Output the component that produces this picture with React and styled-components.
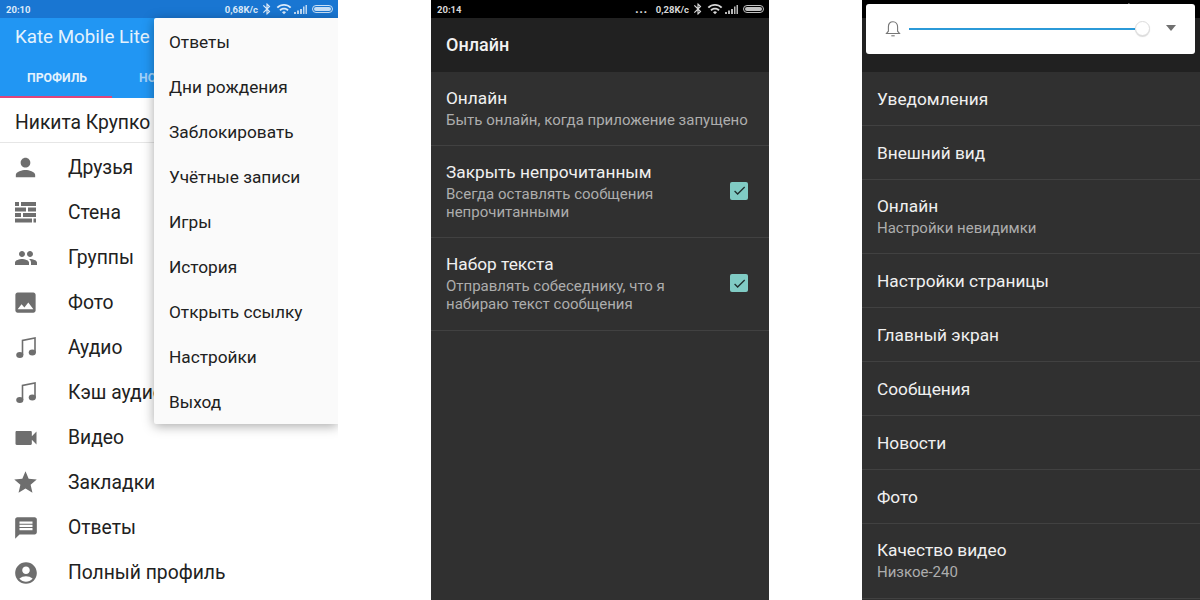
import styled, { createGlobalStyle } from "styled-components";
import {
  MdPerson,
  MdGroup,
  MdImage,
  MdVideocam,
  MdStar,
  MdMessage,
  MdAccountCircle,
  MdBluetooth,
  MdWifi,
  MdCheck,
} from "react-icons/md";

const GlobalStyle = createGlobalStyle`
  html, body {
    margin: 0;
    padding: 0;
    background: #fff;
    font-family: Roboto, "Liberation Sans", sans-serif;
  }
`;

const Page = styled.div`
  display: flex;
  justify-content: space-between;
  width: 1200px;
  height: 600px;
  overflow: hidden;
`;

const Phone = styled.div`
  position: relative;
  display: flex;
  flex-direction: column;
  width: 338px;
  height: 600px;
  overflow: hidden;
  background: ${(p) => (p.$dark ? "#303030" : "#fff")};
`;

const StatusBar = styled.div`
  display: flex;
  align-items: center;
  flex: 0 0 18px;
  padding: 0 5px 0 6px;
  background: ${(p) => (p.$dark ? "#000" : "#1976d2")};
  color: ${(p) => (p.$dark ? "#d8d8d8" : "#dcebfa")};
  font-size: 9.5px;
  font-weight: 700;
`;

const StatusRight = styled.div`
  display: flex;
  align-items: center;
  gap: 2px;
  margin-left: auto;
`;

const Dots = styled.span`
  margin-right: 6px;
  font-size: 13px;
  line-height: 12px;
  letter-spacing: 0.5px;
`;

const Battery = styled.span`
  width: 21px;
  height: 8px;
  margin-left: 3px;
  border: 1px solid currentColor;
  border-radius: 4px;
  background: currentColor;
  background-clip: content-box;
  padding: 1px;
  box-sizing: border-box;
  opacity: 0.9;
`;

const Toolbar = styled.div`
  display: flex;
  flex-direction: column;
  flex: 0 0 80px;
  box-sizing: border-box;
  background: #2196f3;
`;

const AppTitle = styled.div`
  flex: 1;
  padding: 7px 0 0 15px;
  color: #e3f2fd;
  font-size: 18.75px;
  line-height: 24px;
`;

const Tabs = styled.div`
  display: flex;
  flex: 0 0 40px;
`;

const Tab = styled.div`
  flex: 0 0 112px;
  box-sizing: border-box;
  padding: 3px 0 0 27px;
  color: ${(p) => (p.$active ? "#e3f2fd" : "rgba(255, 255, 255, 0.6)")};
  font-size: 12.25px;
  font-weight: 700;
  line-height: 36px;
  border-bottom: 2px solid ${(p) => (p.$active ? "#e0457b" : "transparent")};
`;

const NameRow = styled.div`
  flex: 0 0 45px;
  min-height: 0;
  box-sizing: border-box;
  padding-left: 15px;
  color: #212121;
  font-size: 19.3px;
  line-height: 49px;
  border-bottom: 1px solid #e6e6e6;
`;

const MenuList = styled.div`
  display: flex;
  flex-direction: column;
  padding-top: 2px;
`;

const ListRow = styled.div`
  display: flex;
  align-items: center;
  height: 45px;
  padding-left: 15px;
  color: #212121;
  font-size: 19.3px;
  white-space: nowrap;
`;

const IconSlot = styled.span`
  display: flex;
  align-items: center;
  justify-content: center;
  width: 21px;
  margin-right: 32px;
  color: #6e6e6e;

  svg {
    flex: none;
  }
`;

const Dropdown = styled.div`
  position: absolute;
  top: 18px;
  left: 154px;
  right: 0;
  padding-top: 1px;
  background: #fafafa;
  border-radius: 2px 0 0 2px;
  box-shadow: 0 2px 12px rgba(0, 0, 0, 0.35);
`;

const DropdownItem = styled.div`
  height: 45px;
  padding-left: 15px;
  color: #212121;
  font-size: 17.25px;
  line-height: 47px;
`;

const DarkHeader = styled.div`
  flex: 0 0 54px;
  padding-left: 15px;
  background: #212121;
  color: #f2f2f2;
  font-size: 18px;
  font-weight: 500;
  line-height: 54px;
`;

const SettingRow = styled.div`
  display: flex;
  align-items: center;
  justify-content: space-between;
  flex: 0 0 auto;
  min-height: ${(p) => p.$height}px;
  box-sizing: border-box;
  padding: 0 21px 0 15px;
  border-bottom: 1px solid #414141;
`;

const SettingText = styled.div`
  display: flex;
  flex-direction: column;
`;

const SettingTitle = styled.div`
  color: #f0f0f0;
  font-size: 17.25px;
  line-height: 22px;
`;

const SettingSub = styled.div`
  margin: 2px 0;
  color: #adadad;
  font-size: 15px;
  line-height: 18px;
  white-space: pre-line;
`;

const CheckBox = styled.span`
  display: flex;
  align-items: center;
  justify-content: center;
  width: 18px;
  height: 18px;
  margin-top: -2px;
  border-radius: 2px;
  background: #80cbc4;
  color: #1f2f2e;
`;

const VolumeCard = styled.div`
  position: absolute;
  top: 4px;
  left: 4px;
  display: flex;
  align-items: center;
  width: 329px;
  height: 50px;
  box-sizing: border-box;
  padding: 0 19px;
  background: #fff;
  border-radius: 3px;
  color: #777;
`;

const SliderTrack = styled.div`
  position: relative;
  flex: 1;
  height: 2px;
  margin: 0 31px 0 8px;
  background: #2b9ad8;
`;

const SliderThumb = styled.span`
  position: absolute;
  top: -7px;
  right: -15px;
  width: 15px;
  height: 15px;
  box-sizing: border-box;
  border: 1px solid #ddd;
  border-radius: 50%;
  background: #fff;
  box-shadow: 0 1px 1px rgba(0, 0, 0, 0.15);
`;

const Caret = styled.span`
  width: 0;
  height: 0;
  margin-top: -2px;
  border-left: 5px solid transparent;
  border-right: 5px solid transparent;
  border-top: 6px solid #707070;
`;

function WallIcon() {
  return (
    <svg width="21" height="21" viewBox="0 0 21 21" fill="currentColor">
      <path d="M0 0h4v4H0zM6 0h15v4H6zM0 5.500h11v4H0zM13 5.500h8v4h-8zM0 11h6v4H0zM8 11h13v4H8zM0 16.500h17v4H0zM18.500 16.500H21v4h-2.500z" />
    </svg>
  );
}

function NotesIcon() {
  return (
    <svg width="20" height="22" viewBox="0 0 20 22" fill="currentColor">
      <path d="M6.500 18V3.500L19 1v14.500" fill="none" stroke="currentColor" strokeWidth="1.6" />
      <ellipse cx="3.800" cy="18" rx="3.600" ry="3" />
      <ellipse cx="16.300" cy="15.500" rx="3.600" ry="3" />
    </svg>
  );
}

function SignalIcon() {
  return (
    <svg width="13" height="9" viewBox="0 0 13 9" fill="currentColor">
      <path d="M0 7h2v2H0zM3 5.500h2V9H3zM6 4h2v5H6zM9 1.500h1.500V9H9zM11.500 0H13v9h-1.500z" opacity="0.85" />
    </svg>
  );
}

function BellIcon() {
  return (
    <svg width="16" height="18" viewBox="0 0 16 18" fill="none" stroke="currentColor" strokeWidth="1.100">
      <path d="M8 1.800c-3 0-4.600 2.200-4.600 5v4.400L1.500 13.500h13l-1.900-2.300V6.800c0-2.800-1.600-5-4.600-5z" />
      <path d="M6.300 15.800h3.400" />
    </svg>
  );
}

const profileItems = [
  { label: "Друзья", icon: <MdPerson size={29} /> },
  { label: "Стена", icon: <WallIcon /> },
  { label: "Группы", icon: <MdGroup size={24} /> },
  { label: "Фото", icon: <MdImage size={27} /> },
  { label: "Аудио", icon: <NotesIcon /> },
  { label: "Кэш аудио", icon: <NotesIcon /> },
  { label: "Видео", icon: <MdVideocam size={28} /> },
  { label: "Закладки", icon: <MdStar size={27} /> },
  { label: "Ответы", icon: <MdMessage size={26} /> },
  { label: "Полный профиль", icon: <MdAccountCircle size={26} /> },
];

const dropdownItems = [
  "Ответы",
  "Дни рождения",
  "Заблокировать",
  "Учётные записи",
  "Игры",
  "История",
  "Открыть ссылку",
  "Настройки",
  "Выход",
];

const onlineSettings = [
  { title: "Онлайн", sub: "Быть онлайн, когда приложение запущено", height: 74 },
  {
    title: "Закрыть непрочитанным",
    sub: "Всегда оставлять сообщения\nнепрочитанными",
    height: 92,
    checked: true,
  },
  {
    title: "Набор текста",
    sub: "Отправлять собеседнику, что я\nнабираю текст сообщения",
    height: 93,
    checked: true,
  },
];

const mainSettings = [
  { title: "Уведомления", height: 54 },
  { title: "Внешний вид", height: 54 },
  { title: "Онлайн", sub: "Настройки невидимки", height: 74 },
  { title: "Настройки страницы", height: 54 },
  { title: "Главный экран", height: 54 },
  { title: "Сообщения", height: 54 },
  { title: "Новости", height: 54 },
  { title: "Фото", height: 54 },
  { title: "Качество видео", sub: "Низкое-240", height: 75 },
];

function Status({ time, speed, dark }) {
  return (
    <StatusBar $dark={dark}>
      {time}
      <StatusRight>
        {dark && <Dots>...</Dots>}
        {speed}
        <MdBluetooth size={14} />
        <MdWifi size={16} />
        <SignalIcon />
        <Battery />
      </StatusRight>
    </StatusBar>
  );
}

function Setting({ item }) {
  return (
    <SettingRow $height={item.height}>
      <SettingText>
        <SettingTitle>{item.title}</SettingTitle>
        {item.sub && <SettingSub>{item.sub}</SettingSub>}
      </SettingText>
      {item.checked && (
        <CheckBox>
          <MdCheck size={15} />
        </CheckBox>
      )}
    </SettingRow>
  );
}

export default function App() {
  return (
    <Page>
      <GlobalStyle />
      <Phone>
        <Status time="20:10" speed="0,68K/c" />
        <Toolbar>
          <AppTitle>Kate Mobile Lite</AppTitle>
          <Tabs>
            <Tab $active>ПРОФИЛЬ</Tab>
            <Tab>НОВОСТИ</Tab>
          </Tabs>
        </Toolbar>
        <NameRow>Никита Крупко</NameRow>
        <MenuList>
          {profileItems.map((item) => (
            <ListRow key={item.label}>
              <IconSlot>{item.icon}</IconSlot>
              {item.label}
            </ListRow>
          ))}
        </MenuList>
        <Dropdown>
          {dropdownItems.map((label) => (
            <DropdownItem key={label}>{label}</DropdownItem>
          ))}
        </Dropdown>
      </Phone>

      <Phone $dark>
        <Status time="20:14" speed="0,28K/c" dark />
        <DarkHeader>Онлайн</DarkHeader>
        {onlineSettings.map((item) => (
          <Setting key={item.title} item={item} />
        ))}
      </Phone>

      <Phone $dark>
        <Status time="20:14" speed="0,28K/c" dark />
        <DarkHeader />
        {mainSettings.map((item) => (
          <Setting key={item.title} item={item} />
        ))}
        <VolumeCard>
          <BellIcon />
          <SliderTrack>
            <SliderThumb />
          </SliderTrack>
          <Caret />
        </VolumeCard>
      </Phone>
    </Page>
  );
}
